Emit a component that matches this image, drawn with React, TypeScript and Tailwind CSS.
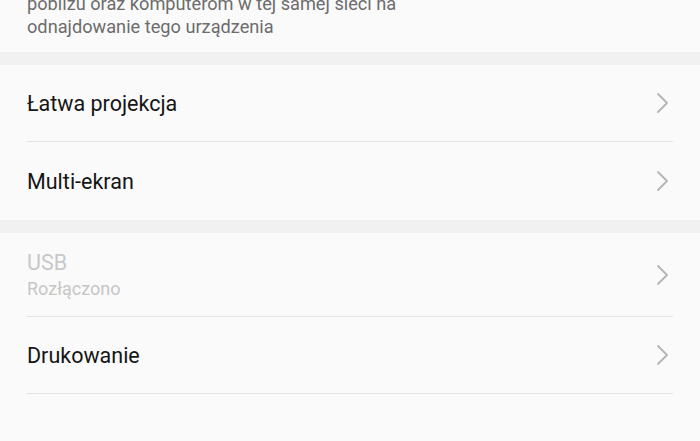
const Chevron = () => (
  <svg width="14" height="22" viewBox="0 0 14 22" fill="none" className="shrink-0">
    <path d="M2 2 L11 11 L2 20" stroke="#b5b5b5" strokeWidth="1.8" strokeLinecap="round" strokeLinejoin="round" />
  </svg>
);

type RowProps = {
  title: string;
  subtitle?: string;
  disabled?: boolean;
  divider?: boolean;
  height: string;
};

const Row = ({ title, subtitle, disabled, divider, height }: RowProps) => (
  <div className="pl-[27px] pr-[27px]">
    <div className={`flex items-center justify-between ${height} ${divider ? 'border-b border-[#e4e4e4]' : ''}`}>
      <div className="flex flex-col">
        <span className={`text-[21.5px] leading-[27px] ${disabled ? 'text-[#c8c8c8]' : 'text-[#151515]'}`}>
          {title}
        </span>
        {subtitle && (
          <span className="text-[18px] leading-[25px] text-[#c6c6c6]">{subtitle}</span>
        )}
      </div>
      <div className="pr-[3px]">
        <Chevron />
      </div>
    </div>
  </div>
);

export default function App() {
  return (
    <div
      className="w-[700px] h-[441px] overflow-hidden bg-[#fafafa] flex flex-col"
      style={{ fontFamily: 'Roboto, "Noto Sans", sans-serif' }}
    >
      <div className="h-[52px] overflow-hidden flex flex-col justify-end pl-[27px] pb-[14px] text-[18.2px] leading-[23px] text-[#6c6c6c]">
        <div>pobliżu oraz komputerom w tej samej sieci na</div>
        <div>odnajdowanie tego urządzenia</div>
      </div>
      <div className="h-[13px] bg-[#f1f1f1]" />
      <div className="flex flex-col">
        <Row title="Łatwa projekcja" divider height="h-[77px]" />
        <Row title="Multi-ekran" height="h-[78px]" />
      </div>
      <div className="h-[13px] bg-[#f1f1f1]" />
      <div className="flex flex-col">
        <Row title="USB" subtitle="Rozłączono" disabled divider height="h-[84px]" />
        <Row title="Drukowanie" divider height="h-[77px]" />
      </div>
    </div>
  );
}
